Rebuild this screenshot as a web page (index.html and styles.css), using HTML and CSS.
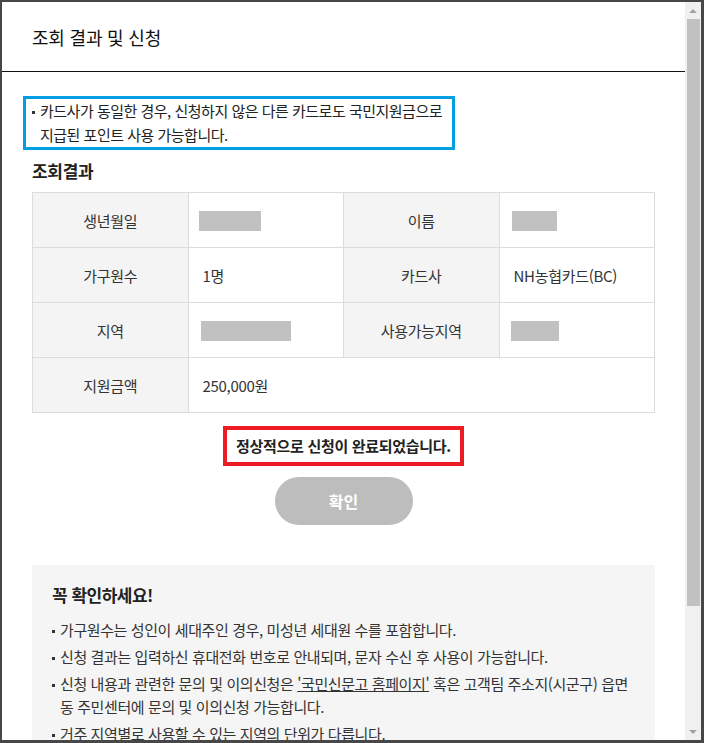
FILE: index.html
```html
<!DOCTYPE html>
<html lang="ko">
<head>
  <meta charset="UTF-8" />
  <meta name="viewport" content="width=device-width, initial-scale=1.0"/>
  <title>조회 결과 및 신청</title>
  <link rel="stylesheet" href="styles.css">
</head>
<body>
  <div class="window">
    <div class="page">
      <div class="pop-head">
        <h2 class="pop-title">조회 결과 및 신청</h2>
      </div>

      <div class="pop-body">
        <div class="notice">
          <p class="dot-item">카드사가 동일한 경우, 신청하지 않은 다른 카드로도 국민지원금으로<br>지급된 포인트 사용 가능합니다.</p>
        </div>

        <h3 class="sub-title">조회결과</h3>
        <table class="result-table">
          <colgroup>
            <col class="col-q"><col class="col-q"><col class="col-q"><col class="col-q">
          </colgroup>
          <tr>
            <th>생년월일</th>
            <td><span class="mask mask-birth"></span></td>
            <th>이름</th>
            <td><span class="mask mask-name"></span></td>
          </tr>
          <tr>
            <th>가구원수</th>
            <td>1명</td>
            <th>카드사</th>
            <td>NH농협카드(BC)</td>
          </tr>
          <tr>
            <th>지역</th>
            <td><span class="mask mask-area"></span></td>
            <th>사용가능지역</th>
            <td><span class="mask mask-use"></span></td>
          </tr>
          <tr>
            <th>지원금액</th>
            <td colspan="3">250,000원</td>
          </tr>
        </table>

        <div class="done">
          <p class="done-msg">정상적으로 신청이 완료되었습니다.</p>
        </div>

        <div class="btn-area">
          <button class="btn-ok" type="button">확인</button>
        </div>

        <div class="check-box">
          <h4 class="check-title">꼭 확인하세요!</h4>
          <ul class="check-list">
            <li class="dot-item">가구원수는 성인이 세대주인 경우, 미성년 세대원 수를 포함합니다.</li>
            <li class="dot-item">신청 결과는 입력하신 휴대전화 번호로 안내되며, 문자 수신 후 사용이 가능합니다.</li>
            <li class="dot-item">신청 내용과 관련한 문의 및 이의신청은 <a href="#" class="link">'국민신문고 홈페이지'</a> 혹은 고객팀 주소지(시군구) 읍면<br>동 주민센터에 문의 및 이의신청 가능합니다.</li>
            <li class="dot-item">거주 지역별로 사용할 수 있는 지역의 단위가 다릅니다.</li>
          </ul>
        </div>
      </div>
    </div>

    <div class="scrollbar">
      <div class="sb-btn"><span class="arrow-up"></span></div>
      <div class="sb-track"><div class="sb-thumb"></div></div>
      <div class="sb-btn"><span class="arrow-down"></span></div>
    </div>
  </div>
</body>
</html>
```

FILE: styles.css
```css
* {
  box-sizing: border-box;
}
body {
  margin: 0;
  overflow: hidden;
  font-family: "Noto Sans CJK KR", "Noto Sans", sans-serif;
  color: #333;
}
.window {
  display: flex;
  height: 743px;
  border-style: solid;
  border-color: #474747;
  border-width: 2px 3px 3px 2px;
  overflow: hidden;
}
.page {
  flex: 1;
  overflow: hidden;
  background-color: #fff;
}

/* header */
.pop-head {
  display: flex;
  align-items: center;
  height: 70px;
  padding-left: 30px;
  border-bottom: 1px solid #111;
}
.pop-title {
  margin: 0;
  font-size: 18px;
  font-weight: normal;
  letter-spacing: -0.2px;
  color: #111;
}

.pop-body {
  padding: 24px 30px 0;
}

/* bullet text */
.dot-item {
  padding-left: 8px;
  text-indent: -8px;
}
.dot-item::before {
  content: "";
  display: inline-block;
  width: 3px;
  height: 3px;
  margin-right: 5px;
  vertical-align: middle;
  background-color: #333;
}

.notice {
  width: 432px;
  margin-left: -9px;
  padding: 0 6px;
  border: 3px solid #009fe3;
}
.notice p {
  margin: 0;
  font-size: 15px;
  line-height: 24px;
  letter-spacing: -0.5px;
  color: #222;
}

.sub-title {
  margin: 9px 0 9px;
  font-size: 17px;
  line-height: 24px;
  letter-spacing: -0.3px;
  color: #222;
}

/* result table */
.result-table {
  width: 100%;
  border-collapse: collapse;
  table-layout: fixed;
  font-size: 15px;
  letter-spacing: -0.3px;
}
.col-q {
  width: 25%;
}
.result-table th,
.result-table td {
  height: 55px;
  padding: 0 14px;
  border: 1px solid #dcdcdc;
  color: #333;
}
.result-table th {
  font-weight: normal;
  background-color: #f4f4f4;
  text-align: center;
}
.result-table td {
  text-align: left;
}
.mask {
  display: inline-block;
  height: 20px;
  vertical-align: middle;
  background-color: #c1c1c1;
}
.mask-birth {
  width: 62px;
  margin-left: -4px;
}
.mask-name {
  width: 45px;
  margin-left: -2px;
}
.mask-area {
  width: 90px;
  margin-left: -2px;
}
.mask-use {
  width: 48px;
  margin-left: -3px;
}

/* result message */
.done {
  margin-top: 13px;
  text-align: center;
}
.done-msg {
  display: inline-block;
  margin: 0;
  padding: 0 9px;
  border: 4px solid #ed1c24;
  font-size: 15px;
  font-weight: bold;
  line-height: 32px;
  letter-spacing: -0.3px;
  color: #222;
}

.btn-area {
  margin-top: 11px;
  text-align: center;
}
.btn-ok {
  width: 138px;
  height: 48px;
  border: none;
  border-radius: 24px;
  background-color: #bdbdbd;
  color: #fff;
  font-family: inherit;
  font-size: 16px;
  font-weight: bold;
}

/* notice box */
.check-box {
  margin-top: 40px;
  padding: 18px 20px 30px;
  background-color: #f5f5f5;
}
.check-title {
  margin: 0;
  font-size: 17px;
  line-height: 24px;
  letter-spacing: -0.5px;
  color: #222;
}
.check-list {
  margin: 11px 0 0;
  padding: 0;
  list-style: none;
  font-size: 15px;
  line-height: 23px;
  letter-spacing: -0.4px;
  color: #333;
}
.check-list li {
  margin-top: 4px;
}
.link {
  color: #333;
  text-decoration: underline;
}

/* fake scrollbar */
.scrollbar {
  display: flex;
  flex-direction: column;
  width: 16px;
  background-color: #f0f0f0;
}
.sb-btn {
  display: flex;
  align-items: center;
  justify-content: center;
  height: 17px;
}
.arrow-up {
  border-left: 4px solid transparent;
  border-right: 4px solid transparent;
  border-bottom: 4px solid #a3a3a3;
}
.arrow-down {
  border-left: 4px solid transparent;
  border-right: 4px solid transparent;
  border-top: 4px solid #a3a3a3;
}
.sb-track {
  flex: 1;
}
.sb-thumb {
  height: 587px;
  margin: 0 1px 0 2px;
  background-color: #c1c1c1;
}
```
